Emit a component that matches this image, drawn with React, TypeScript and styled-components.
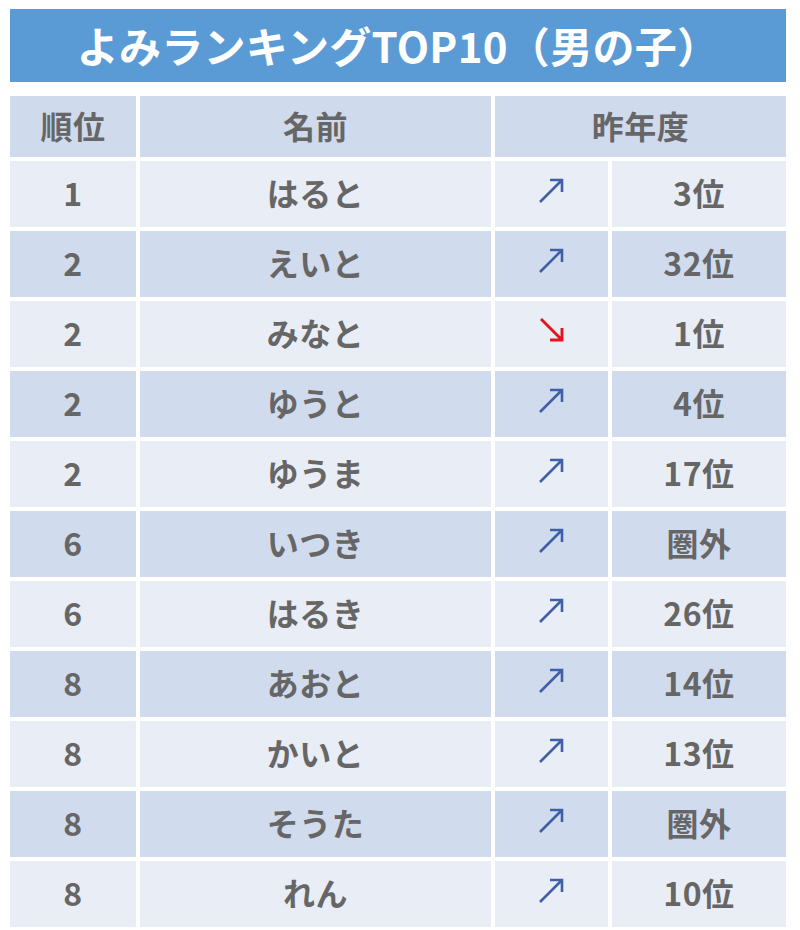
import React from "react";
import styled, { createGlobalStyle } from "styled-components";

const Global = createGlobalStyle`
  html, body { margin: 0; padding: 0; background: #ffffff; }
  body { font-family: "Noto Sans CJK JP", "Noto Sans", sans-serif; }
`;

const Page = styled.div`
  width: 776px;
  padding: 9px 0 0 10px;
`;

const Title = styled.h1`
  margin: 0 0 14px;
  height: 73px;
  background: #5b9bd5;
  color: #ffffff;
  font-size: 42px;
  font-weight: 700;
  display: flex;
  align-items: center;
  justify-content: center;
  padding-bottom: 2px;
  box-sizing: border-box;
  letter-spacing: 0.3px;
`;

const Grid = styled.div`
  display: grid;
  grid-template-columns: 126px 351px 113px 174px;
  grid-template-rows: 61px;
  grid-auto-rows: 66px;
  gap: 4px;
`;

const Cell = styled.div<{ $tone: "head" | "light" | "dark"; $span?: number }>`
  grid-column: span ${(p) => p.$span ?? 1};
  background: ${(p) =>
    p.$tone === "head" ? "#cfdaec" : p.$tone === "dark" ? "#d0dbee" : "#e9edf6"};
  color: #666666;
  font-size: 32px;
  font-weight: 700;
  display: flex;
  align-items: center;
  justify-content: center;
  line-height: 1;
  padding-bottom: 4px;
  box-sizing: border-box;
  letter-spacing: 0.5px;
`;

const ArrowBox = styled.svg`
  width: 30px;
  height: 30px;
  margin-top: -4px;
`;

const Arrow = ({ up }: { up: boolean }) =>
  up ? (
    <ArrowBox viewBox="0 0 30 30">
      <path
        d="M3 27 L25 5 M13 5 H25 V17"
        fill="none"
        stroke="#3f5fa6"
        strokeWidth="2.6"
      />
    </ArrowBox>
  ) : (
    <ArrowBox viewBox="0 0 30 30">
      <path
        d="M4 4 L25 25 M25 13 V25 H13"
        fill="none"
        stroke="#e3141c"
        strokeWidth="2.9"
      />
    </ArrowBox>
  );

const rows: [string, string, boolean, string][] = [
  ["1", "はると", true, "3位"],
  ["2", "えいと", true, "32位"],
  ["2", "みなと", false, "1位"],
  ["2", "ゆうと", true, "4位"],
  ["2", "ゆうま", true, "17位"],
  ["6", "いつき", true, "圏外"],
  ["6", "はるき", true, "26位"],
  ["8", "あおと", true, "14位"],
  ["8", "かいと", true, "13位"],
  ["8", "そうた", true, "圏外"],
  ["8", "れん", true, "10位"],
];

export default function App() {
  return (
    <>
      <Global />
      <Page>
        <Title>よみランキングTOP10（男の子）</Title>
        <Grid>
          <Cell $tone="head">順位</Cell>
          <Cell $tone="head">名前</Cell>
          <Cell $tone="head" $span={2}>
            昨年度
          </Cell>
          {rows.map(([rank, name, up, last], i) => {
            const tone = i % 2 === 0 ? "light" : "dark";
            return (
              <React.Fragment key={i}>
                <Cell $tone={tone}>{rank}</Cell>
                <Cell $tone={tone}>{name}</Cell>
                <Cell $tone={tone}>
                  <Arrow up={up} />
                </Cell>
                <Cell $tone={tone}>{last}</Cell>
              </React.Fragment>
            );
          })}
        </Grid>
      </Page>
    </>
  );
}
